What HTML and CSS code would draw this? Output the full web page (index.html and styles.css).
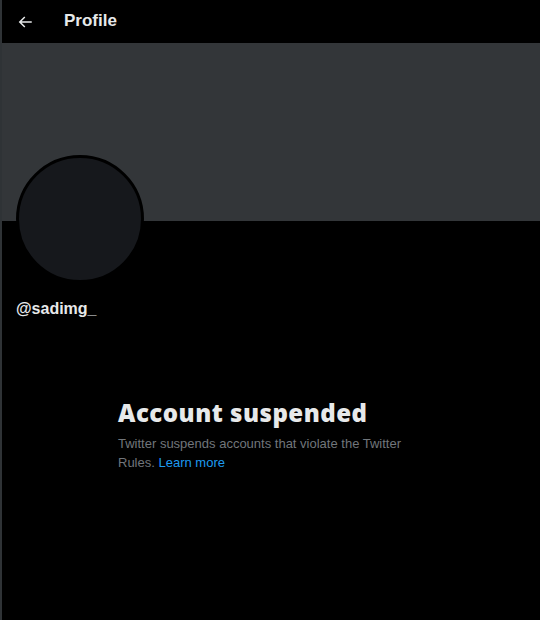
FILE: index.html
```html
<!DOCTYPE html>
<html lang="en">
<head>
    <meta charset="UTF-8">
    <title>Profile</title>
    <link rel="stylesheet" href="styles.css">
</head>
<body>
    <div id="column">
        <div id="topbar">
            <svg class="back-icon" viewBox="0 0 24 24" width="20" height="20">
                <path d="M7.414 13l5.043 5.04-1.414 1.42L3.586 12l7.457-7.46 1.414 1.42L7.414 11H21v2H7.414z"/>
            </svg>
            <h1>Profile</h1>
        </div>

        <div id="banner"></div>

        <div id="profile-info">
            <div class="avatar"></div>
            <div class="handle">@sadimg_</div>
        </div>

        <div id="suspended">
            <h2>Account suspended</h2>
            <p>Twitter suspends accounts that violate the Twitter Rules. <a href="#">Learn more</a></p>
        </div>
    </div>
</body>
</html>
```

FILE: styles.css
```css
body {
    margin: 0;
    padding: 0;
    background-color: #000;
    color: #e7e9ea;
    font-family: "Liberation Sans", Arial, sans-serif;
}

/* coluna principal com a borda da esquerda */
#column {
    border-left: 2px solid #2f3336;
    min-height: 620px;
    box-sizing: border-box;
}

#topbar {
    height: 43px;
    display: flex;
    align-items: center;
    padding-left: 14px;
    box-sizing: border-box;
}

.back-icon {
    fill: #e7e9ea;
    width: 18px;
    height: 18px;
    margin-right: 30px;
}

#topbar h1 {
    margin: 0;
    font-size: 17px;
    font-weight: bold;
    position: relative;
    top: -1px;
}

#banner {
    height: 178px;
    background-color: #333639;
}

#profile-info {
    padding-left: 14px;
}

.avatar {
    width: 122px;
    height: 122px;
    border-radius: 50%;
    background-color: #16181c;
    border: 3px solid #000;
    margin-top: -66px;
}

.handle {
    margin-top: 15px;
    font-size: 16px;
    font-weight: bold;
    line-height: 22px;
}

#suspended {
    margin: 78px 0 0 116px;
    width: 300px;
}

#suspended h2 {
    margin: 0;
    font-family: "Open Sans", "Liberation Sans", sans-serif;
    font-size: 24px;
    font-weight: 800;
    letter-spacing: 0.5px;
    line-height: 30px;
}

#suspended p {
    margin: 6px 0 0;
    font-size: 13px;
    line-height: 19px;
    color: #71767b;
}

#suspended a {
    color: #1d9bf0;
    text-decoration: none;
}
```
